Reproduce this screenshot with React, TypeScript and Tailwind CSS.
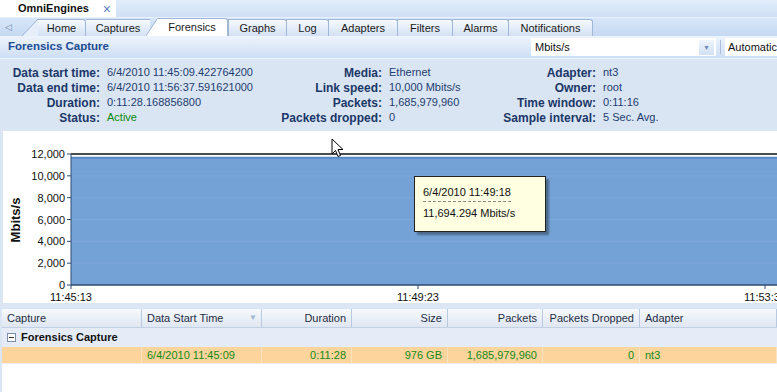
import React from 'react';

const tabs = [
  { label: 'Graphs', w: 'w-[59px]' },
  { label: 'Log', w: 'w-[43px]' },
  { label: 'Adapters', w: 'w-[70px]' },
  { label: 'Filters', w: 'w-[56px]' },
  { label: 'Alarms', w: 'w-[57px]' },
  { label: 'Notifications', w: 'w-[85px]' },
];

const info = [
  ['Data start time:', '6/4/2010 11:45:09.422764200', 'Media:', 'Ethernet', 'Adapter:', 'nt3'],
  ['Data end time:', '6/4/2010 11:56:37.591621000', 'Link speed:', '10,000 Mbits/s', 'Owner:', 'root'],
  ['Duration:', '0:11:28.168856800', 'Packets:', '1,685,979,960', 'Time window:', '0:11:16'],
  ['Status:', 'Active', 'Packets dropped:', '0', 'Sample interval:', '5 Sec. Avg.'],
];

const cols = [
  { label: 'Capture', w: 'w-[140px]', align: 'text-left' },
  { label: 'Data Start Time', w: 'w-[120px]', align: 'text-left' },
  { label: 'Duration', w: 'w-[90px]', align: 'text-right' },
  { label: 'Size', w: 'w-[96px]', align: 'text-right' },
  { label: 'Packets', w: 'w-[95px]', align: 'text-right' },
  { label: 'Packets Dropped', w: 'w-[97px]', align: 'text-right' },
  { label: 'Adapter', w: 'flex-1', align: 'text-left' },
];

const row = ['', '6/4/2010 11:45:09', '0:11:28', '976 GB', '1,685,979,960', '0', 'nt3'];

const Tab = ({ label, w }: { label: string; w: string }) => (
  <div className={`${w} h-[17px] flex items-center justify-center border border-b-0 border-[#9fb6d6] rounded-tr-[3px] bg-gradient-to-b from-[#f6f9fe] to-[#d3e1f4] -ml-px first:ml-0 text-[#1a1a1a]`}>
    {label}
  </div>
);

const Slant = ({ w, fill }: { w: number; fill: string }) => (
  <svg width={w} height={17} className="shrink-0">
    <polygon points={`0,17 ${w},0 ${w},17`} fill={fill} />
    <line x1={0} y1={17} x2={w} y2={0} stroke="#9fb6d6" strokeWidth={1} />
  </svg>
);

function Chart() {
  const top = 23;
  const bottom = 154;
  const left = 68;
  const step = (bottom - top) / 6;
  const fillTop = bottom - (11694.294 / 12000) * (bottom - top);
  const yLabels = ['0', '2,000', '4,000', '6,000', '8,000', '10,000', '12,000'];
  const xTicks = [
    { x: 68, t: '11:45:13' },
    { x: 415, t: '11:49:23' },
    { x: 762, t: '11:53:33' },
  ];
  return (
    <svg width={774} height={172} className="block">
      <line x1={left} y1={top} x2={774} y2={top} stroke="#111" strokeWidth={1.5} />
      <rect x={left} y={fillTop} width={774 - left} height={bottom - fillTop} fill="#75a2d6" />
      <line x1={left} y1={fillTop + 0.5} x2={774} y2={fillTop + 0.5} stroke="#5a89c6" strokeWidth={2} />
      {yLabels.map((_, i) =>
        i > 0 && i < 6 ? (
          <line key={'g' + i} x1={left} y1={bottom - i * step} x2={774} y2={bottom - i * step} stroke="#7ea8da" strokeWidth={1} />
        ) : null
      )}
      <line x1={left} y1={top} x2={left} y2={bottom} stroke="#2c4a72" strokeWidth={1} />
      <line x1={left} y1={bottom} x2={774} y2={bottom} stroke="#2c4a72" strokeWidth={1.5} />
      {yLabels.map((l, i) => (
        <g key={l}>
          <line x1={left - 4} y1={bottom - i * step} x2={left} y2={bottom - i * step} stroke="#2c4a72" />
          <text x={left - 6} y={bottom - i * step + 4} textAnchor="end" fontSize={11} fill="#111" fontFamily="'Liberation Sans', Arial, sans-serif">
            {l}
          </text>
        </g>
      ))}
      {xTicks.map((t) => (
        <g key={t.t}>
          <line x1={t.x} y1={bottom} x2={t.x} y2={bottom + 4} stroke="#2c4a72" />
          <text x={t.x} y={bottom + 16} textAnchor="middle" fontSize={11} fill="#111" fontFamily="'Liberation Sans', Arial, sans-serif">
            {t.t}
          </text>
        </g>
      ))}
      <text
        x={14}
        y={89}
        transform="rotate(-90 14 89)"
        textAnchor="middle"
        dominantBaseline="middle"
        fontSize={13}
        fontWeight="bold"
        fill="#111"
        fontFamily="'Liberation Sans', Arial, sans-serif"
      >
        Mbits/s
      </text>
    </svg>
  );
}

export default function App() {
  return (
    <div className="relative w-[777px] h-[392px] overflow-hidden bg-[#d6e4f5] text-[11px] leading-none font-['Liberation_Sans',Arial,sans-serif]">
      {/* document tab */}
      <div className="h-[17px] flex bg-gradient-to-b from-[#e2edfb] to-[#cfdff5]">
        <div className="w-[116px] h-full bg-white flex items-center pl-[18px] pr-[5px] justify-between">
          <span className="font-bold text-[11px] text-[#111]">OmniEngines</span>
          <span className="text-[#5b80b8] text-[14px]">×</span>
        </div>
      </div>

      {/* tab strip */}
      <div className="h-[19px] flex items-end bg-gradient-to-b from-[#d8e6f9] to-[#c5d9f2] border-t border-[#e8f0fb]">
        <div className="w-[22px] h-[17px] flex items-center pl-[5px] text-[#6a84a8] text-[9px]">◁</div>
        <Slant w={16} fill="#e6eefa" />
        <div className="w-[48px] h-[17px] flex items-center justify-center border-t border-r border-[#9fb6d6] rounded-tr-[3px] bg-gradient-to-b from-[#f6f9fe] to-[#d3e1f4] text-[#1a1a1a]">
          Home
        </div>
        <div className="w-[64px] h-[17px] flex items-center justify-center border-t border-[#9fb6d6] bg-gradient-to-b from-[#f6f9fe] to-[#d3e1f4] text-[#1a1a1a]">
          Captures
        </div>
        <div className="-ml-[4px] flex items-end">
          <Slant w={11} fill="#ffffff" />
        </div>
        <div className="w-[71px] h-[18px] flex items-center justify-center bg-white border-t border-r border-[#9fb6d6] rounded-tr-[3px] text-[#1a1a1a]">
          Forensics
        </div>
        <div className="flex items-end">
          {tabs.map((t) => (
            <Tab key={t.label} label={t.label} w={t.w} />
          ))}
        </div>
      </div>

      {/* header */}
      <div className="h-[22px] flex items-center bg-gradient-to-b from-[#eef4fd] to-[#cddef4]">
        <div className="pl-[8px] font-bold text-[11.5px] text-[#1c4b92] w-[531px]">Forensics Capture</div>
        <div className="w-[185px] h-[18px] bg-white flex items-center justify-between pl-[4px] pr-[2px]">
          <span className="text-[#111]">Mbits/s</span>
          <span className="w-[15px] h-[15px] flex items-center justify-center bg-gradient-to-b from-[#f0f5fc] to-[#d2e0f2] text-[#6f8fb8] text-[7px]">▼</span>
        </div>
        <div className="w-px h-[14px] bg-[#a9bfdc] mx-[4px]" />
        <div className="flex-1 h-[18px] bg-white flex items-center pl-[3px] text-[#111]">Automatic</div>
      </div>

      {/* info panel */}
      <div className="h-[70px] bg-[#d9e5f3] border-t border-[#eef4fb] pt-[6px] grid grid-cols-[100px_161px_107px_93px_107px_1fr] gap-x-[7px] auto-rows-[15px] items-center">
        {info.map((r, i) => (
          <React.Fragment key={i}>
            <div className="text-right font-bold text-[12px] text-[#1b3768]">{r[0]}</div>
            <div className={i === 3 ? 'text-[#0a8a0a]' : 'text-[#1e3d70]'}>{r[1]}</div>
            <div className="text-right font-bold text-[12px] text-[#1b3768]">{r[2]}</div>
            <div className="text-[#1e3d70]">{r[3]}</div>
            <div className="text-right font-bold text-[12px] text-[#1b3768]">{r[4]}</div>
            <div className="text-[#1e3d70]">{r[5]}</div>
          </React.Fragment>
        ))}
      </div>

      {/* chart */}
      <div className="h-[175px] pl-[3px] pt-[3px] bg-[#dae6f4]">
        <div className="h-[172px] bg-white">
          <Chart />
        </div>
      </div>

      {/* table */}
      <div className="pl-[2px] pt-[6px] bg-[#dae6f4] h-[89px]">
        <div className="bg-white h-full">
          <div className="h-[19px] flex bg-gradient-to-b from-[#f7f9fd] to-[#dfe7f2] border-b border-[#c2d1e6] text-[#1f2d45]">
            {cols.map((c, i) => (
              <div key={c.label} className={`${c.w} ${c.align} h-full flex items-center border-r border-[#b9c9df] px-[5px] ${c.align === 'text-right' ? 'justify-end' : 'justify-between'}`}>
                <span>{c.label}</span>
                {i === 1 && <span className="text-[#9fb3cf] text-[8px] mr-[-1px]">▼</span>}
              </div>
            ))}
          </div>
          <div className="h-[19px] flex items-center bg-[#e5ecf7] pl-[5px] gap-[5px]">
            <span className="w-[9px] h-[9px] border border-[#7d8ea8] bg-white flex items-center justify-center">
              <span className="w-[5px] h-px bg-[#333]" />
            </span>
            <span className="font-bold text-[11px] text-[#111]">Forensics Capture</span>
          </div>
          <div className="h-[17px] flex bg-[#fdd49c] border-b border-[#eee] text-[#148a14]">
            {cols.map((c, i) => (
              <div key={c.label} className={`${c.w} h-full flex items-center px-[5px] border-r border-[#fbe3c2] ${c.align === 'text-right' ? 'justify-end' : 'justify-start'}`}>
                {row[i]}
              </div>
            ))}
          </div>
        </div>
      </div>

      {/* tooltip */}
      <div className="absolute left-[414px] top-[176px] w-[132px] h-[56px] bg-[#ffffe1] border border-[#222] shadow-[3px_3px_2px_rgba(0,0,0,0.35)] pl-[8px] pt-[10px] text-[#111]">
        <div className="inline-block border-b border-dashed border-[#888] pb-[3px]">6/4/2010 11:49:18</div>
        <div className="mt-[6px]">11,694.294 Mbits/s</div>
      </div>

      {/* mouse cursor */}
      <svg className="absolute left-[331px] top-[138px]" width={14} height={22} viewBox="0 0 14 22">
        <path d="M1 1 L1 16 L4.5 12.5 L7 18.5 L9.5 17.5 L7 11.5 L12 11.5 Z" fill="#fff" stroke="#000" strokeWidth={1} strokeLinejoin="round" />
      </svg>
    </div>
  );
}
